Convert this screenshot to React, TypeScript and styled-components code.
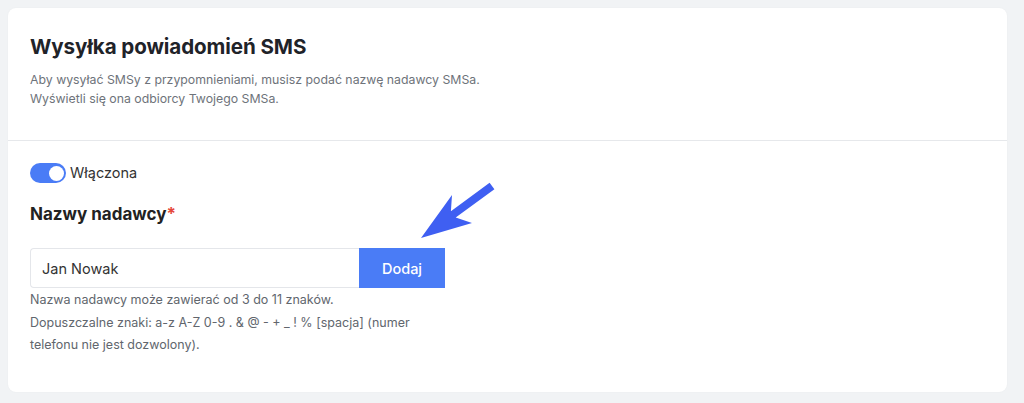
import React from 'react';
import styled, { createGlobalStyle } from 'styled-components';

const GlobalStyle = createGlobalStyle`
	html, body {
		margin: 0;
		padding: 0;
		background: #f1f3f5;
	}
	body {
		font-family: Inter, 'Noto Sans', 'Liberation Sans', sans-serif;
		color: #222;
	}
`;

const PageUI = styled.div`
	padding: 8px 17px 11px 8px;
	box-sizing: border-box;
	min-height: 403px;
`;

const CardUI = styled.div`
	position: relative;
	background: #fff;
	border-radius: 8px;
	box-shadow: 0 0 2px rgba(0, 0, 0, 0.04);
	height: 384px;
	box-sizing: border-box;
`;

const HeaderUI = styled.div`
	padding: 25px 22px 0;
	height: 133px;
	box-sizing: border-box;
	border-bottom: 1px solid #e6e8eb;

	h1 {
		margin: 0 0 9px;
		font-size: 20.6px;
		font-weight: 700;
		line-height: 28px;
		color: #1f2329;
		letter-spacing: -0.1px;
	}
	p {
		margin: 0;
		font-size: 12.3px;
		line-height: 19px;
		color: #6e737a;
	}
`;

const BodyUI = styled.div`
	padding: 22px 22px 0;
`;

const SwitchRowUI = styled.label`
	display: flex;
	align-items: center;
	gap: 4px;
	font-size: 14.5px;
	color: #333;
	line-height: 20px;
`;

const SwitchUI = styled.span<{ $on: boolean }>`
	position: relative;
	width: 36px;
	height: 20px;
	border-radius: 10px;
	background: ${(p) => (p.$on ? '#4a7cf6' : '#c9ccd1')};

	&::after {
		content: '';
		position: absolute;
		top: 2.5px;
		left: ${(p) => (p.$on ? '18.5px' : '2.5px')};
		width: 15px;
		height: 15px;
		border-radius: 50%;
		background: #fff;
	}
`;

const LabelUI = styled.div`
	margin-top: 19px;
	font-size: 17px;
	font-weight: 700;
	line-height: 24px;
	color: #222;

	span {
		color: #e5483b;
	}
`;

const GroupUI = styled.div`
	width: 415px;
	margin-top: 22px;
`;

const InputRowUI = styled.div`
	display: flex;
	height: 40px;
`;

const InputUI = styled.input`
	flex: 1;
	min-width: 0;
	box-sizing: border-box;
	border: 1px solid #e4e6ea;
	border-right: none;
	border-radius: 4px 0 0 4px;
	padding: 0 11px;
	font-family: inherit;
	font-size: 14.5px;
	color: #333;
	outline: none;
	background: #fff;
`;

const ButtonUI = styled.button`
	width: 86px;
	border: none;
	background: #4a7cf6;
	color: #fff;
	font-family: inherit;
	font-size: 14.5px;
	font-weight: 500;
	cursor: pointer;
`;

const HelpUI = styled.div`
	margin-top: 1px;
	font-size: 12.5px;
	line-height: 22.5px;
	color: #61666d;
`;

const ArrowUI = styled.svg`
	position: absolute;
	left: 0;
	top: 0;
	width: 100%;
	height: 100%;
	pointer-events: none;
	overflow: visible;
`;

const App = () => (
	<>
		<GlobalStyle />
		<PageUI>
			<CardUI>
				<HeaderUI>
					<h1>Wysyłka powiadomień SMS</h1>
					<p>
						Aby wysyłać SMSy z przypomnieniami, musisz podać nazwę nadawcy SMSa.
						<br />
						Wyświetli się ona odbiorcy Twojego SMSa.
					</p>
				</HeaderUI>
				<BodyUI>
					<SwitchRowUI>
						<SwitchUI $on />
						Włączona
					</SwitchRowUI>
					<LabelUI>
						Nazwy nadawcy<span>*</span>
					</LabelUI>
					<GroupUI>
						<InputRowUI>
							<InputUI defaultValue='Jan Nowak' />
							<ButtonUI>Dodaj</ButtonUI>
						</InputRowUI>
						<HelpUI>
							<div>Nazwa nadawcy może zawierać od 3 do 11 znaków.</div>
							<div>
								Dopuszczalne znaki: a-z A-Z 0-9 . &amp; @ - + _ ! % [spacja] (numer telefonu nie jest
								dozwolony).
							</div>
						</HelpUI>
					</GroupUI>
				</BodyUI>
				<ArrowUI viewBox='0 0 999 384' preserveAspectRatio='none'>
					<g transform='translate(-8 -8)'>
						<polygon
							fill='#3f5ff2'
							points='421,238 452,195 450.9,211.2 489.6,182.8 494.4,189.2 455.7,217.6 472,223'
						/>
					</g>
				</ArrowUI>
			</CardUI>
		</PageUI>
	</>
);

export default App;
